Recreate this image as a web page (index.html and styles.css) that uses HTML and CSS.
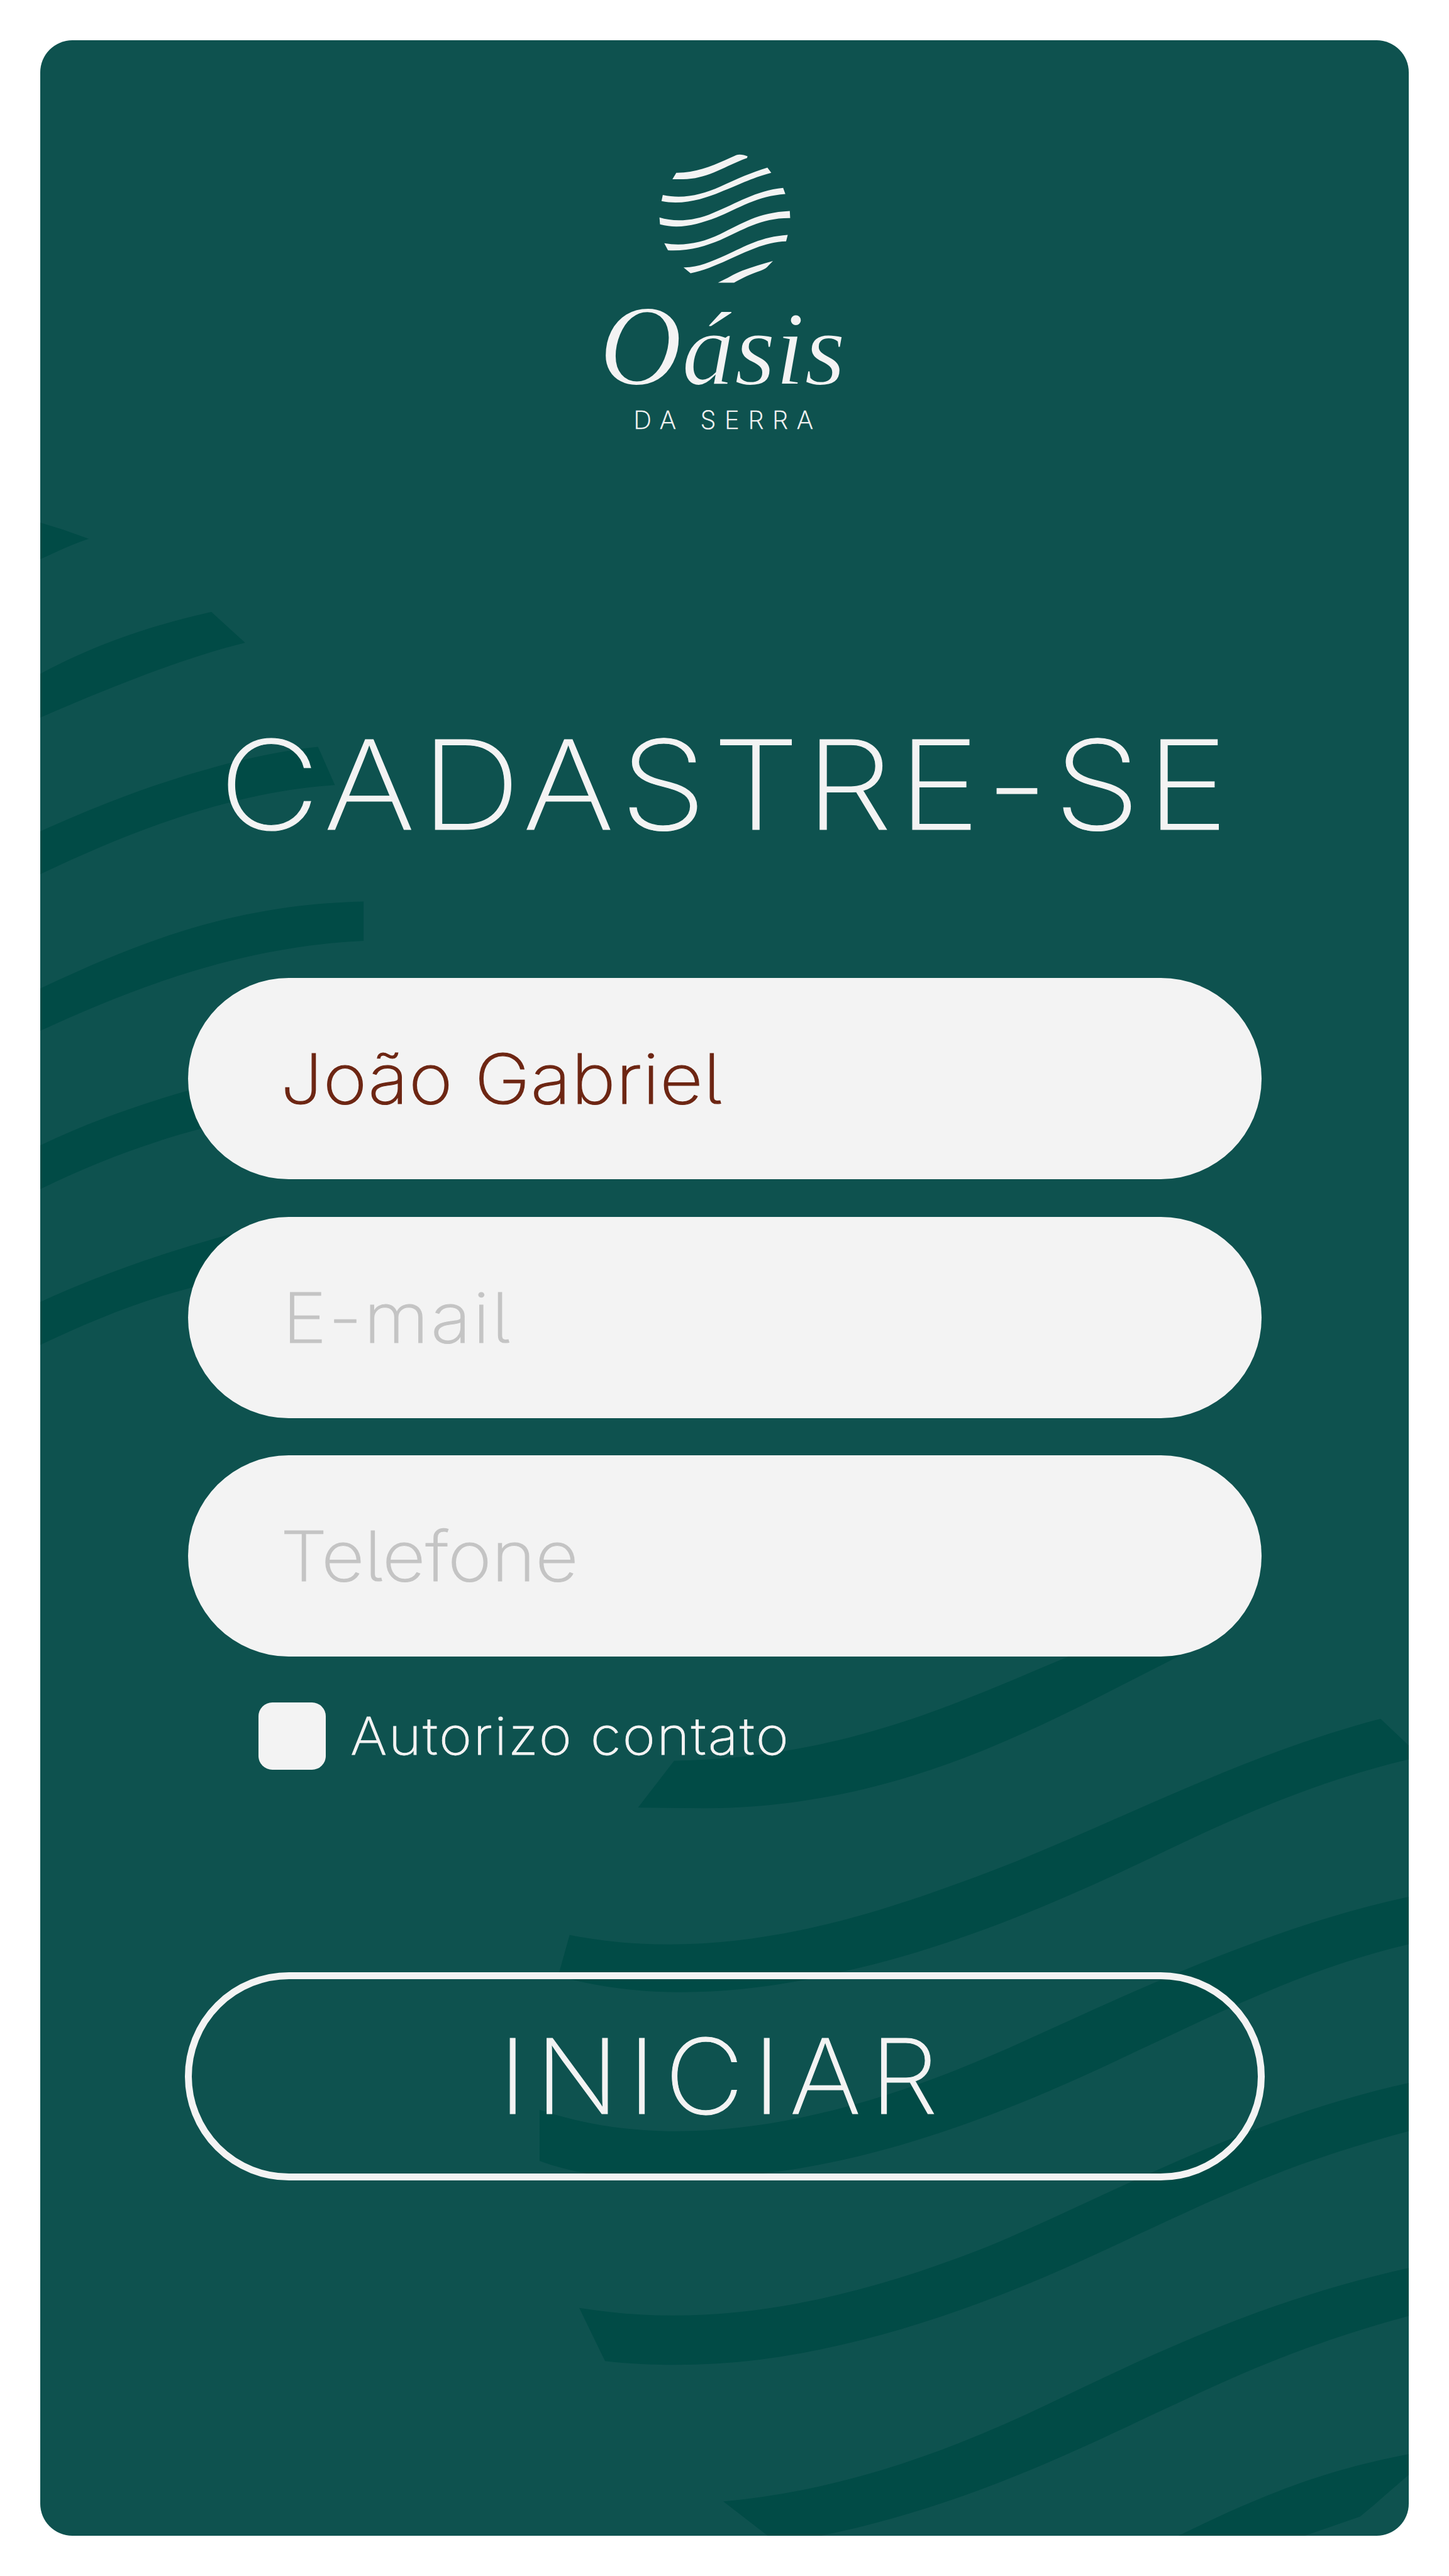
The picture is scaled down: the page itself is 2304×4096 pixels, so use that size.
FILE: index.html
```html
<!DOCTYPE html>
<html lang="pt-BR">
<head>
<meta charset="utf-8">
<title>Oásis da Serra – Cadastre-se</title>
<link rel="stylesheet" href="styles.css">
</head>
<body>
<main class="card">
  <svg class="waves" viewBox="83.33 83.33 2833.33 5166.67" preserveAspectRatio="none" aria-hidden="true">
    <g transform="translate(60 1050) scale(.4719 .6378)">
      <path d="M40,48 L150,73 L262,103 C190,120 120,146 40,172Z"/>
      <path d="M40,545 C300,440 560,380 800,340 L948,440 C700,485 400,570 40,686Z"/>
      <path d="M40,1056 C350,950 840,811 1268,778 L1342,902 C900,925 480,1040 40,1195Z"/>
      <path d="M40,1566 C480,1412 900,1290 1468,1280 L1468,1408 C960,1425 500,1545 40,1703Z"/>
    </g>
    <g transform="translate(60 2000) scale(.4719 .5421)">
      <path d="M40,689 C250,600 480,530 720,470 L900,430 L900,590 L750,622 C500,680 250,765 40,856Z"/>
      <path d="M40,1287 C320,1175 580,1098 900,1020 L900,1180 L715,1228 C480,1280 260,1360 40,1451Z"/>
    </g>
    <g transform="translate(1050 3400) scale(1.2436 .7015)">
      <path d="M278,350 C560,340 740,186 932,44 L960,20 L1140,20 L1115,44 C900,236 660,488 330,490 L218,488Z"/>
      <path d="M104,864 C380,960 640,790 850,645 C1050,500 1240,325 1454,226 L1510,320 L1510,342 C1330,415 1180,545 1050,655 C900,780 740,900 560,972 C400,1040 230,1060 85,985Z"/>
      <path d="M54,1380 C330,1545 640,1355 860,1178 C1080,1000 1280,835 1510,748 L1510,888 C1330,960 1180,1100 1050,1205 C840,1385 640,1520 440,1565 C300,1600 160,1600 54,1531Z"/>
    </g>
    <g transform="translate(1050 4400) scale(1.2436 .5957)">
      <path d="M120,635 C340,710 560,620 800,422 C1000,250 1220,-20 1510,-151 L1510,16 C1300,130 1180,255 1050,380 C880,550 660,750 420,815 C330,838 240,838 163,820Z"/>
      <path d="M360,1308 C560,1270 740,1130 900,970 C1080,790 1270,600 1510,492 L1510,658 C1300,775 1180,905 1050,1030 C880,1200 700,1360 490,1440 L442,1440Z"/>
      <path d="M1105,1440 C1230,1310 1350,1200 1510,1140 L1510,1200 C1475,1260 1450,1310 1420,1360 L1310,1440Z"/>
    </g>
  </svg>

  <div class="content">
    <header class="brand">
      <svg class="brand-mark" viewBox="430 118 710 801" preserveAspectRatio="none" aria-hidden="true">
        <path d="M523,234 C640,236 740,180 848,124 C862,117 890,122 908,132 L905,142 C790,190 690,274 560,274 L502,274Z"/>
        <path d="M450,372 C560,400 660,370 760,320 C850,272 930,232 1015,202 L1036,234 C920,270 860,310 760,354 C680,392 560,438 443,410Z"/>
        <path d="M432,512 C520,544 630,530 720,484 C850,425 950,345 1100,328 L1112,366 C960,378 860,455 740,512 C640,555 540,588 435,555Z"/>
        <path d="M458,672 C560,692 660,670 760,615 C880,550 960,482 1136,472 L1138,516 C980,514 880,592 760,652 C680,690 590,722 478,716Z"/>
        <path d="M562,822 C640,824 710,786 790,746 C900,688 980,632 1125,620 L1116,660 C1000,664 900,726 800,776 C730,812 670,842 600,858Z"/>
        <path d="M748,917 C800,890 830,865 880,842 C930,820 990,800 1045,782 L1020,812 C1012,824 1000,834 980,842 C920,864 880,890 835,917Z"/>
      </svg>
      <div class="brand-name">O<span class="brand-small">ásis</span></div>
      <div class="brand-sub">DA SERRA</div>
    </header>

    <h1 class="title">CADASTRE-SE</h1>

    <form class="form">
      <div class="field"><input class="input" type="text" value="João Gabriel"></div>
      <div class="field"><input class="input input-email" type="text" placeholder="E-mail"></div>
      <div class="field"><input class="input input-phone" type="text" placeholder="Telefone"></div>
      <label class="consent">
        <span class="checkbox"></span>
        <span class="consent-text">Autorizo contato</span>
      </label>
      <button class="submit" type="button"><span class="submit-text">INICIAR</span></button>
    </form>
  </div>
</main>
</body>
</html>
```
FILE: styles.css
```css
* { box-sizing: border-box; }

body {
  margin: 0;
  padding: 64px;
  background: #fff;
  color: #f3f3f3;
  font-family: Inter, "Liberation Sans", sans-serif;
  font-weight: 200;
  font-feature-settings: "cv05";
}

.card {
  display: grid;
  width: 2176px;
  height: 3968px;
  border-radius: 51px;
  overflow: hidden;
  background: #0e524f;
}

.waves,
.content { grid-area: 1 / 1; }

.waves {
  width: 2176px;
  height: 3968px;
  fill: #014b46;
}

.content {
  position: relative;
  display: flex;
  flex-direction: column;
  padding: 181px 229px 0;
}

.brand {
  display: flex;
  flex-direction: column;
  align-items: center;
}

.brand-mark {
  width: 209px;
  height: 205px;
  fill: #f3f3f3;
}

.brand-name {
  margin: 9px 7px 0 0;
  font: italic 400 182px/182px "Liberation Serif", serif;
  letter-spacing: -.4px;
  -webkit-text-stroke: 2px #0e524f;
}

.brand-small {
  font-size: 168px;
  line-height: 0;
}

.brand-sub {
  margin-top: 7px;
  padding-left: 10px;
  font-size: 40px;
  line-height: 40px;
  letter-spacing: 13.7px;
  -webkit-text-stroke: .6px;
}

.title {
  margin: 460px 0 0;
  padding-left: 6px;
  font-size: 197px;
  font-weight: 200;
  line-height: 200px;
  letter-spacing: 8.6px;
  text-align: center;
  white-space: nowrap;
  transform: scaleX(1.12);
  -webkit-text-stroke: 1.1px;
}

.form {
  display: flex;
  flex-direction: column;
  margin-top: 207px;
}

.field {
  display: flex;
  width: 1707px;
  height: 320px;
  margin: 0 0 59.7px 5.7px;
  padding-left: 147px;
  border-radius: 160px;
  background: #f3f3f3;
}

.field:nth-child(3) { margin-bottom: 0; }

.input {
  width: 1300px;
  padding: 0;
  border: 0;
  outline: 0;
  background: none;
  color: #6d2613;
  font: inherit;
  font-feature-settings: inherit;
  font-size: 110px;
  letter-spacing: .8px;
  transform: scaleX(1.08);
  transform-origin: 0 50%;
  -webkit-text-stroke: 1.2px;
}

.input::placeholder {
  color: #c4c4c4;
  opacity: 1;
}

.input-email {
  padding-left: 3px;
  letter-spacing: 2.9px;
}

.input-phone { letter-spacing: 0; }

.consent {
  display: flex;
  align-items: center;
  gap: 38.5px;
  height: 107px;
  margin: 72.6px 0 0 118.4px;
}

.checkbox {
  flex: none;
  width: 107px;
  height: 107px;
  border-radius: 22px;
  background: #f3f3f3;
}

.consent-text {
  font-size: 82.4px;
  line-height: 1;
  letter-spacing: 2.2px;
  white-space: nowrap;
  transform: scaleX(1.08);
  transform-origin: 0 50%;
  -webkit-text-stroke: .8px;
}

.submit {
  width: 1717px;
  height: 331px;
  margin: 322px 0 0 .6px;
  padding: 0 6px 0 0;
  border: 11px solid #f3f3f3;
  border-radius: 166px;
  background: none;
  color: inherit;
  font: inherit;
  font-size: 165px;
}

.submit-text {
  display: inline-block;
  letter-spacing: 13.6px;
  transform: scaleX(1.05);
  -webkit-text-stroke: .9px;
}
```
